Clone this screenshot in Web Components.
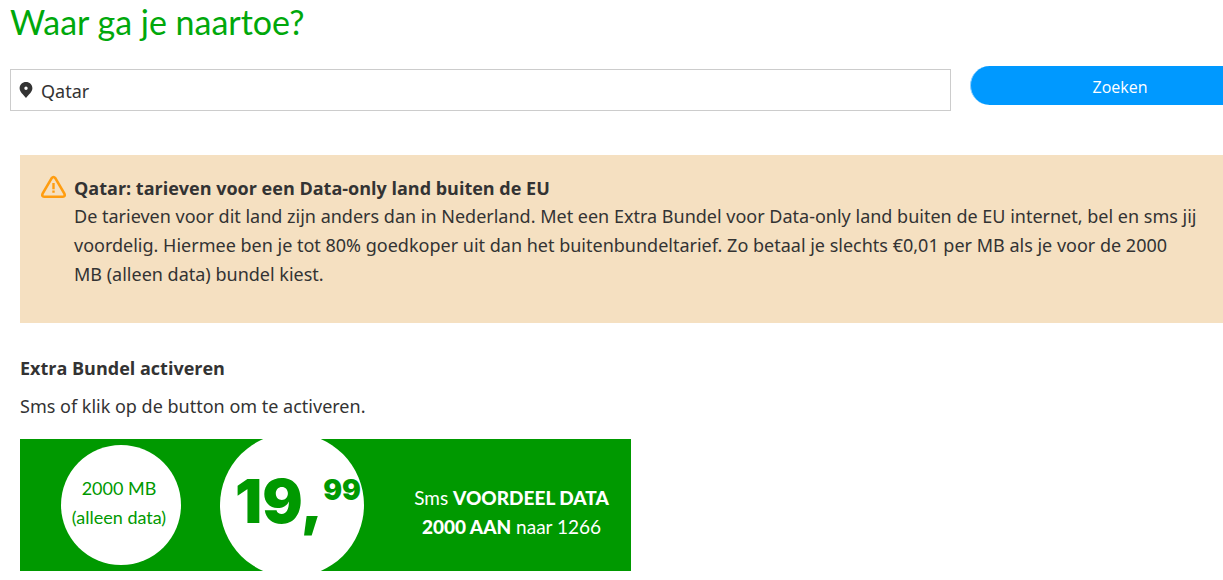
<!DOCTYPE html>
<html lang="nl">
<head>
<meta charset="utf-8">
<meta name="viewport" content="width=device-width, initial-scale=1">
<title>Waar ga je naartoe?</title>
<style>
body { margin: 0; background: #fff; color: #333; font: 18px/29px "Noto Sans", "Open Sans", sans-serif; }
notice-panel strong { font-family: "Open Sans", sans-serif; }
bundle-card strong { font-weight: 900; }
</style>
</head>
<body>
<roaming-page>
  <travel-search value="Qatar"></travel-search>
  <notice-panel>
    <strong slot="title">Qatar: tarieven voor een Data-only land buiten de EU</strong>
    De tarieven voor dit land zijn anders dan in Nederland. Met een Extra Bundel voor Data-only land buiten de EU internet, bel en sms jij<br>
    voordelig. Hiermee ben je tot 80% goedkoper uit dan het buitenbundeltarief. Zo betaal je slechts €0,01 per MB als je voor de 2000<br>
    MB (alleen data) bundel kiest.
  </notice-panel>
  <bundle-section>
    <span slot="title">Extra Bundel activeren</span>
    <span slot="intro">Sms of klik op de button om te activeren.</span>
    <bundle-card>
      <span slot="size">2000 MB<br>(alleen data)</span>
      <span slot="euros">19,</span>
      <span slot="cents">99</span>
      <span slot="sms">Sms <strong>VOORDEEL DATA<br>2000 AAN</strong> naar 1266</span>
    </bundle-card>
  </bundle-section>
</roaming-page>
<script>
const define = (name, html, setup) => customElements.define(name, class extends HTMLElement {
  constructor() {
    super();
    this.attachShadow({ mode: "open" }).innerHTML = html;
  }
  connectedCallback() { if (setup) setup(this); }
});

define("roaming-page", `
<style>
  :host { display: block; overflow: hidden; padding-bottom: 8px; }
  h1 { margin: 0; padding: 1px 10px; font: 400 34px/42px Lato, sans-serif; color: #00a80b; }
</style>
<h1>Waar ga je naartoe?</h1>
<main><slot></slot></main>`);

define("travel-search", `
<style>
  :host { display: block; margin: 22px -47px 0 10px; }
  form { display: grid; grid-template-columns: minmax(0, 1fr) 300px; column-gap: 19px; align-items: start; }
  label { display: flex; align-items: center; box-sizing: border-box; height: 42px; margin-top: 3px; padding: 0 8px; gap: 8px; border: 1px solid #ccc; }
  svg { flex: none; width: 14px; height: 18px; }
  input { flex: 1; min-width: 0; border: 0; padding: 2px 0 0; outline: 0; background: none; font: inherit; color: inherit; }
  button { height: 39px; border: 1px solid #8fd0ff; border-width: 0 1px; border-radius: 20px; background: #09f; color: #fff; font: 16px/24px "Open Sans", sans-serif; padding: 3px 0 0; }
</style>
<form>
  <label>
    <svg viewBox="0 0 14 18" aria-hidden="true"><path fill="#333" fill-rule="evenodd" d="M7 1C3.400 1 .6 3.700.6 7.200c0 3.600 3.700 6.300 6.400 9.800 2.700-3.500 6.400-6.200 6.400-9.800C13.400 3.700 10.600 1 7 1zm0 4.500a1.700 1.700 0 1 1 0 3.400 1.700 1.700 0 0 1 0-3.400z"/></svg>
    <input type="text" aria-label="Bestemming">
  </label>
  <button type="button">Zoeken</button>
</form>`, el => { el.shadowRoot.querySelector("input").value = el.getAttribute("value"); });

define("notice-panel", `
<style>
  :host { display: block; margin: 44px -20px 0 20px; }
  section { display: flex; gap: 8px; padding: 19px 0 34px 21px; background: #f5e0c1; }
  svg { flex: none; width: 25px; height: 24px; margin-top: 1px; }
  p { margin: 0; white-space: nowrap; }
  .title { display: block; height: 28px; }
</style>
<section>
  <svg viewBox="0 0 25 24" fill="none" stroke="#ff9d10" aria-hidden="true"><path stroke-width="2.600" stroke-linejoin="round" d="M10.700 3.100 1.600 18.700Q.5 21.500 3.200 21.800H21.800Q24.500 21.500 23.400 18.700L14.300 3.100Q12.500.8 10.700 3.100Z"/><path stroke-width="2.400" d="M12.500 8v6.200M12.500 15.600v2.200"/></svg>
  <p><span class="title"><slot name="title"></slot></span><slot></slot></p>
</section>`);

define("bundle-section", `
<style>
  :host { display: block; margin: 31px 20px 0; }
  h2 { margin: 0; font: 700 18px/29px "Open Sans", sans-serif; }
  p { margin: 9px 0 18px; }
</style>
<h2><slot name="title"></slot></h2>
<p><slot name="intro"></slot></p>
<slot></slot>`);

define("bundle-card", `
<style>
  :host { display: block; max-width: 611px; font-family: Lato, sans-serif; }
  article { display: flex; align-items: center; height: 132px; overflow: hidden; background: #090; }
  .size, .price { flex: none; display: flex; justify-content: center; box-sizing: border-box; border-radius: 50%; background: #fff; color: #090; }
  .size { align-items: center; width: 120px; height: 120px; margin-left: 41px; padding: 0 4px 4px 0; text-align: center; }
  .price { width: 144px; height: 144px; margin-left: 39px; padding-left: 12px; font-family: Inter, sans-serif; font-weight: 900; }
  .euros { font-size: 60px; line-height: 136px; }
  .cents { font-size: 28px; line-height: 114px; }
  .sms { flex: 1; padding: 14px 0 0 28px; text-align: center; color: #fff; font-size: 19px; white-space: nowrap; }
</style>
<article>
  <div class="size"><slot name="size"></slot></div>
  <div class="price"><span class="euros"><slot name="euros"></slot></span><span class="cents"><slot name="cents"></slot></span></div>
  <div class="sms"><slot name="sms"></slot></div>
</article>`);
</script>
</body>
</html>
